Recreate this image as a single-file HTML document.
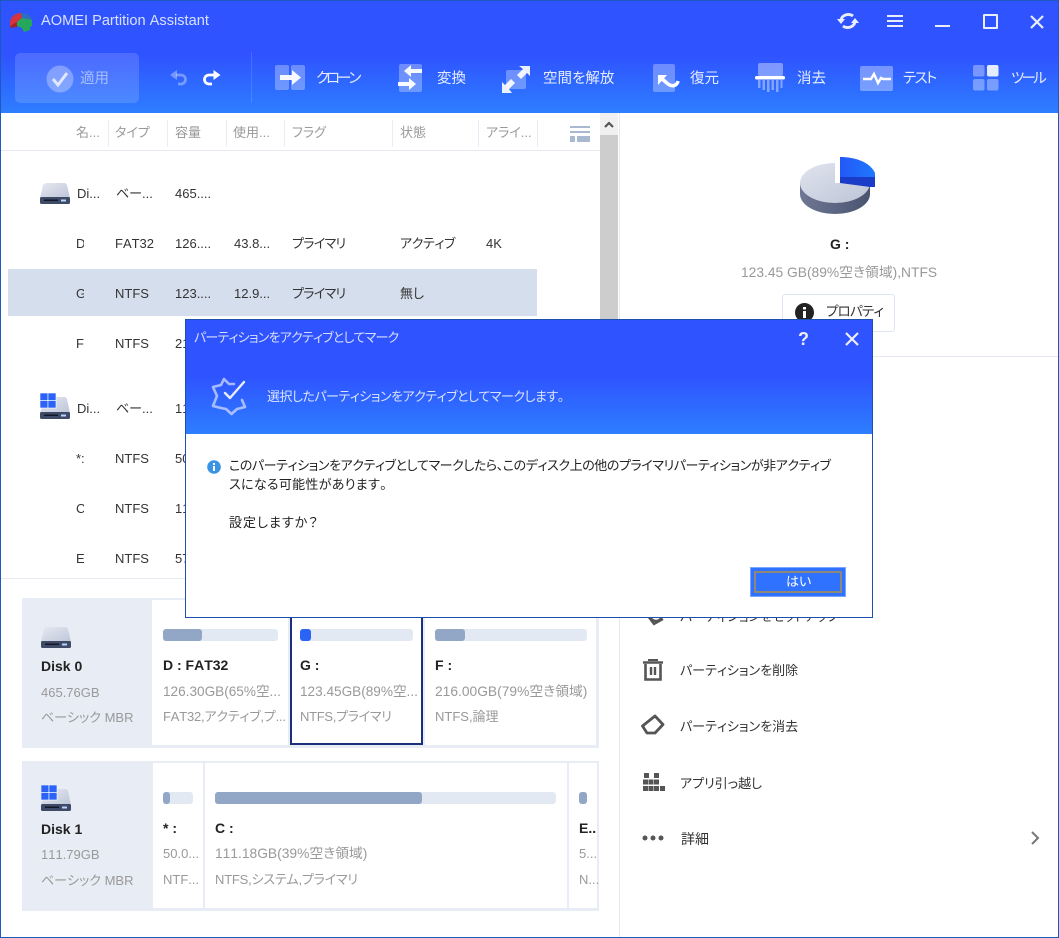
<!DOCTYPE html>
<html lang="ja"><head><meta charset="utf-8"><title>AOMEI Partition Assistant</title>
<style>
html,body{margin:0;padding:0;background:#fff}
#w{position:relative;width:1059px;height:938px;overflow:hidden;background:#fff;font-family:"Liberation Sans","Noto Sans CJK JP",sans-serif;font-feature-settings:"palt";font-kerning:none;color:#333;font-size:13px}
#w div,#w svg{position:absolute}
.t{white-space:nowrap;height:20px;line-height:20px}
.h{font-size:14.500px;color:#fff;opacity:.88}
.c{color:#999;font-size:13px}
.r{color:#333;font-size:13px}
.g{color:#999;font-size:13px}
.g2{color:#999;font-size:13.600px}
.g3{color:#999;font-size:13.800px}
.b{font-weight:bold;color:#222;font-size:13px}
.m{font-size:13px;color:#333}
.sep{width:1px;top:120px;height:27px;background:#e8ecf4}
.bar{height:12px;background:#e3e9f3;border-radius:3px}
.bar div{left:0;top:0;height:12px;background:#92a7c5;border-radius:3px}
.p{background:#fff}
</style></head><body><div id="w">

<div style="left:0;top:0;width:1059px;height:113px;background:linear-gradient(#2f54ff 0,#2f54ff 50%,#2e7eff 100%)"></div>

<svg style="left:9px;top:11px" width="24" height="21" viewBox="0 0 24 21"><path d="M1 11C2 5 7 2 12 2l1 5-5 4-7 4z" fill="#d8333a"/><path d="M12 2c5 0 10 2 11 7l-7-1-3-1z" fill="#2c6fc0"/><path d="M8 11l5-4 10 2v6l-2 1v3l-6 2-2-4-5-2z" fill="#25a85a"/><path d="M1 15l7-4 0 5-6 1z" fill="#a82328"/></svg>
<div class="t" style="left:41px;top:11px;font-size:14.600px;color:#fff;opacity:.82">AOMEI Partition Assistant</div>

<svg style="left:837px;top:11px" width="22" height="20" viewBox="0 0 22 20" fill="none" stroke="#e8eeff" stroke-width="2.800"><path d="M4 9a7.500 7 0 0 1 12-4"/><path d="M18 11a7.500 7 0 0 1-12 4"/><path d="M0 8h8l-4 5z" fill="#e8eeff" stroke="none"/><path d="M14 12h8l-4-5z" fill="#e8eeff" stroke="none"/></svg>
<svg style="left:887px;top:14px" width="16" height="14" fill="#e8eeff"><rect y="1" width="16" height="2"/><rect y="6" width="16" height="2"/><rect y="11" width="16" height="2"/></svg>
<div style="left:935px;top:25px;width:15px;height:2px;background:#e8eeff"></div>
<div style="left:983px;top:14px;width:11px;height:11px;border:2px solid #e8eeff;border-radius:1px"></div>
<svg style="left:1030px;top:15px" width="14" height="14" stroke="#e8eeff" stroke-width="2.200"><path d="M1 1l12 12M13 1L1 13"/></svg>

<div style="left:15px;top:53px;width:124px;height:50px;background:rgba(255,255,255,.14);border-radius:5px"></div>
<svg style="left:46px;top:65px" width="28" height="28"><circle cx="14" cy="14" r="13.500" fill="#fff" opacity=".3"/><path d="M7 14l5 6 9-12" fill="none" stroke="#fff" stroke-opacity=".75" stroke-width="3"/></svg>
<div class="t h" style="left:80px;top:69px;opacity:.5">適用</div>
<svg style="left:168px;top:68px" width="21" height="18" fill="none" stroke="#fff" stroke-opacity=".35" stroke-width="2.800"><path d="M8 7h5a4.500 4.500 0 0 1 0 9h-3"/><path d="M2 7l7-5v10z" fill="#fff" fill-opacity=".35" stroke="none"/></svg>
<svg style="left:201px;top:68px" width="21" height="18" fill="none" stroke="#fff" stroke-width="2.800"><path d="M13 7H8a4.500 4.500 0 0 0 0 9h3"/><path d="M19.500 7l-7-5v10z" fill="#fff" stroke="none"/></svg>
<div style="left:251px;top:52px;width:1px;height:51px;background:rgba(255,255,255,.13)"></div>

<svg style="left:275px;top:65px" width="30" height="26"><rect width="14" height="25" rx="2" fill="#fff" opacity=".3"/><rect x="16" width="14" height="25" rx="2" fill="#fff" opacity=".3"/><path d="M5 10h12V5l9 7.500-9 7.500v-5H5z" fill="#fff" opacity=".95"/></svg>
<div class="t h" style="left:316px;top:69px;letter-spacing:-3px">クローン</div>
<svg style="left:398px;top:64px" width="26" height="29"><rect x="1" width="23" height="28" rx="2" fill="#fff" opacity=".3"/><path d="M24 5H13V1L6 7l7 6V9h11zM0 18h11v-4l7 6-7 6v-4H0z" fill="#fff" opacity=".95"/></svg>
<div class="t h" style="left:437px;top:69px">変換</div>
<svg style="left:502px;top:65px" width="28" height="28"><rect x="4" y="5" width="20" height="19" rx="2" fill="#fff" opacity=".3"/><path d="M17 1h11v10l-3-3-6 6-4-4 6-6zM0 28V17l3 3 6-6 4 4-6 6 3 4z" fill="#fff" opacity=".9"/></svg>
<div class="t h" style="left:543px;top:69px">空間を解放</div>
<svg style="left:653px;top:64px" width="28" height="29"><rect width="22" height="28" rx="2" fill="#fff" opacity=".3"/><path d="M5 11h9l-9 10z" fill="#fff"/><path d="M8 14l7 6c4 3 9 2 10-3" fill="none" stroke="#fff" stroke-width="3.500"/></svg>
<div class="t h" style="left:690px;top:69px">復元</div>
<svg style="left:755px;top:63px" width="31" height="30"><rect x="3" width="25" height="13" rx="2" fill="#fff" opacity=".38"/><rect y="13" width="30" height="3.500" rx="1.500" fill="#fff"/><g fill="#fff" opacity=".4"><rect x="3" y="17" width="2.500" height="8"/><rect x="7.500" y="17" width="2.500" height="10"/><rect x="12" y="17" width="2.500" height="12"/><rect x="16.500" y="17" width="2.500" height="10"/><rect x="21" y="17" width="2.500" height="12"/><rect x="25.500" y="17" width="2" height="8"/></g></svg>
<div class="t h" style="left:797px;top:69px">消去</div>
<svg style="left:860px;top:66px" width="33" height="25"><rect width="33" height="25" rx="2" fill="#fff" opacity=".35"/><path d="M3 13h8l3-5 4 9 3-5 2 1h8" fill="none" stroke="#fff" stroke-width="2.400"/></svg>
<div class="t h" style="left:903px;top:69px;letter-spacing:-1.600px">テスト</div>
<svg style="left:973px;top:65px" width="26" height="26"><g fill="#fff" opacity=".35"><rect width="11.500" height="11.500" rx="2"/><rect y="14" width="11.500" height="11.500" rx="2"/><rect x="14" y="14" width="11.500" height="11.500" rx="2"/></g><rect x="14" width="11.500" height="11.500" rx="2" fill="#e4ecff"/></svg>
<div class="t h" style="left:1011px;top:69px;letter-spacing:-2.700px">ツール</div>

<div style="left:600px;top:113px;width:18px;height:22px;background:#f0f0f0"></div>
<svg style="left:603px;top:120px" width="12" height="9" fill="none" stroke="#555" stroke-width="2.200"><path d="M2 7l4-4 4 4"/></svg>
<div style="left:600px;top:135px;width:18px;height:190px;background:#cdcdcd"></div>
<div style="left:619px;top:113px;width:1px;height:825px;background:#e3e9f3"></div>

<div class="t c" style="left:76px;top:123px">名...</div><div class="sep" style="left:108px"></div>
<div class="t c" style="left:115px;top:123px">タイプ</div><div class="sep" style="left:167px"></div>
<div class="t c" style="left:175px;top:123px">容量</div><div class="sep" style="left:226px"></div>
<div class="t c" style="left:233px;top:123px">使用...</div><div class="sep" style="left:284px"></div>
<div class="t c" style="left:292px;top:123px">フラグ</div><div class="sep" style="left:392px"></div>
<div class="t c" style="left:400px;top:123px">状態</div><div class="sep" style="left:478px"></div>
<div class="t c" style="left:486px;top:123px">アライ...</div><div class="sep" style="left:537px"></div>
<svg style="left:570px;top:126px" width="20" height="17" fill="#a9b9cf"><rect width="20" height="2"/><rect y="5" width="20" height="2"/><rect y="10" width="5" height="6"/><rect x="7" y="10" width="13" height="6"/></svg>
<div style="left:0;top:150px;width:600px;height:1px;background:#e6e9f0"></div>

<div style="left:8px;top:269px;width:529px;height:47px;background:#d5deed"></div>

<svg style="left:40px;top:182px" width="31" height="23"><defs><linearGradient id="dg" x1="0" y1="0" x2="1" y2="1"><stop offset="0" stop-color="#e6e9f1"/><stop offset="1" stop-color="#bdc5d8"/></linearGradient></defs><path d="M7 1h17q2 0 3 2l3 13H0L3 3q1-2 4-2z" fill="url(#dg)"/><rect x="0" y="15" width="30" height="7" rx="1.500" fill="#3e4a66"/><rect x="4" y="17.500" width="14" height="1.500" fill="#12182a"/><rect x="21" y="17.500" width="5" height="2" fill="#b9d4ff"/></svg>
<div class="t r" style="left:77px;top:184px">Di...</div>
<div class="t r" style="left:116px;top:184px">ベー...</div>
<div class="t r" style="left:175px;top:184px">465....</div>

<div class="t r" style="left:76px;top:234px;width:8px;overflow:hidden">D:</div>
<div class="t r" style="left:115px;top:234px">FAT32</div>
<div class="t r" style="left:175px;top:234px">126....</div>
<div class="t r" style="left:234px;top:234px">43.8...</div>
<div class="t r" style="left:292px;top:234px;letter-spacing:-.7px">プライマリ</div>
<div class="t r" style="left:400px;top:234px;letter-spacing:-.4px">アクティブ</div>
<div class="t r" style="left:486px;top:234px">4K</div>

<div class="t r" style="left:76px;top:284px;width:8px;overflow:hidden">G:</div>
<div class="t r" style="left:115px;top:284px">NTFS</div>
<div class="t r" style="left:175px;top:284px">123....</div>
<div class="t r" style="left:234px;top:284px">12.9...</div>
<div class="t r" style="left:292px;top:284px;letter-spacing:-.7px">プライマリ</div>
<div class="t r" style="left:400px;top:284px">無し</div>

<div class="t r" style="left:76px;top:334px;width:8px;overflow:hidden">F:</div>
<div class="t r" style="left:115px;top:334px">NTFS</div>
<div class="t r" style="left:175px;top:334px">216....</div>

<svg style="left:40px;top:393px" width="31" height="27"><path d="M12 4h12q2 0 3 2l3 14H0l3-10z" fill="url(#dg)"/><rect x="0" y="19" width="30" height="7" rx="1.500" fill="#3e4a66"/><rect x="4" y="21.500" width="14" height="1.500" fill="#12182a"/><rect x="21" y="21.500" width="5" height="2" fill="#b9d4ff"/><g fill="#2a63f5" stroke="#fff" stroke-width=".6"><rect x="0" y="0" width="8" height="7.500"/><rect x="8" y="0" width="8" height="7.500"/><rect x="0" y="7.500" width="8" height="7.500"/><rect x="8" y="7.500" width="8" height="7.500"/></g></svg>
<div class="t r" style="left:77px;top:399px">Di...</div>
<div class="t r" style="left:116px;top:399px">ベー...</div>
<div class="t r" style="left:175px;top:399px">111....</div>

<div class="t r" style="left:76px;top:449px;width:8px;overflow:hidden">*:</div>
<div class="t r" style="left:115px;top:449px">NTFS</div>
<div class="t r" style="left:175px;top:449px">50....</div>
<div class="t r" style="left:76px;top:499px;width:8px;overflow:hidden">C:</div>
<div class="t r" style="left:115px;top:499px">NTFS</div>
<div class="t r" style="left:175px;top:499px">111....</div>
<div class="t r" style="left:76px;top:549px;width:8px;overflow:hidden">E:</div>
<div class="t r" style="left:115px;top:549px">NTFS</div>
<div class="t r" style="left:175px;top:549px">57....</div>

<div style="left:0;top:578px;width:619px;height:1px;background:#e6e9f0"></div>

<div style="left:22px;top:598px;width:577px;height:150px;background:#e8ecf4"></div>
<div class="p" style="left:152px;top:600px;width:136px;height:145px"></div>
<div class="p" style="left:290px;top:600px;width:133px;height:145px;box-sizing:border-box;border:2px solid #1c2f7c"></div>
<div class="p" style="left:425px;top:600px;width:171px;height:145px"></div>

<svg style="left:41px;top:626px" width="31" height="23"><path d="M7 1h17q2 0 3 2l3 13H0L3 3q1-2 4-2z" fill="url(#dg)"/><rect x="0" y="15" width="30" height="7" rx="1.500" fill="#3e4a66"/><rect x="4" y="17.500" width="14" height="1.500" fill="#12182a"/><rect x="21" y="17.500" width="5" height="2" fill="#b9d4ff"/></svg>
<div class="t b" style="left:41px;top:656px;font-size:14px">Disk 0</div>
<div class="t g" style="left:41px;top:683px">465.76GB</div>
<div class="t g" style="left:41px;top:708px">ベーシック MBR</div>

<div class="bar" style="left:163px;top:629px;width:115px"><div style="width:39px"></div></div>
<div class="t b" style="left:163px;top:655px;font-size:14px">D : FAT32</div>
<div class="t g2" style="left:163px;top:682px">126.30GB(65%空...</div>
<div class="t g" style="left:163px;top:707px;letter-spacing:-.2px">FAT32,アクティブ,プ...</div>

<div class="bar" style="left:300px;top:629px;width:113px"><div style="width:11px;background:#2a63f5"></div></div>
<div class="t b" style="left:300px;top:655px;font-size:14px">G :</div>
<div class="t g2" style="left:300px;top:682px">123.45GB(89%空...</div>
<div class="t g" style="left:300px;top:707px;letter-spacing:-.3px">NTFS,プライマリ</div>

<div class="bar" style="left:435px;top:629px;width:152px"><div style="width:30px"></div></div>
<div class="t b" style="left:435px;top:655px;font-size:14px">F :</div>
<div class="t g3" style="left:435px;top:682px">216.00GB(79%空き領域)</div>
<div class="t g" style="left:435px;top:707px">NTFS,論理</div>

<div style="left:22px;top:761px;width:577px;height:150px;background:#e8ecf4"></div>
<div class="p" style="left:153px;top:763px;width:50px;height:145px"></div>
<div class="p" style="left:205px;top:763px;width:362px;height:145px"></div>
<div class="p" style="left:569px;top:763px;width:28px;height:145px"></div>

<svg style="left:41px;top:785px" width="31" height="27"><path d="M12 4h12q2 0 3 2l3 14H0l3-10z" fill="url(#dg)"/><rect x="0" y="19" width="30" height="7" rx="1.500" fill="#3e4a66"/><rect x="4" y="21.500" width="14" height="1.500" fill="#12182a"/><rect x="21" y="21.500" width="5" height="2" fill="#b9d4ff"/><g fill="#2a63f5" stroke="#fff" stroke-width=".6"><rect x="0" y="0" width="8" height="7.500"/><rect x="8" y="0" width="8" height="7.500"/><rect x="0" y="7.500" width="8" height="7.500"/><rect x="8" y="7.500" width="8" height="7.500"/></g></svg>
<div class="t b" style="left:41px;top:819px;font-size:14px">Disk 1</div>
<div class="t g" style="left:41px;top:845px">111.79GB</div>
<div class="t g" style="left:41px;top:871px">ベーシック MBR</div>

<div class="bar" style="left:163px;top:792px;width:30px"><div style="width:7px"></div></div>
<div class="t b" style="left:163px;top:818px;font-size:14px">* :</div>
<div class="t g" style="left:163px;top:844px">50.0...</div>
<div class="t g" style="left:163px;top:870px">NTF...</div>

<div class="bar" style="left:215px;top:792px;width:341px"><div style="width:207px"></div></div>
<div class="t b" style="left:215px;top:818px;font-size:14px">C :</div>
<div class="t g3" style="left:215px;top:844px">111.18GB(39%空き領域)</div>
<div class="t g" style="left:215px;top:870px;letter-spacing:-.2px">NTFS,システム,プライマリ</div>

<div class="bar" style="left:579px;top:792px;width:8px"><div style="width:8px"></div></div>
<div class="t b" style="left:579px;top:818px;font-size:14px;width:18px;overflow:hidden">E...</div>
<div class="t g" style="left:579px;top:844px">5...</div>
<div class="t g" style="left:579px;top:870px">N...</div>

<svg style="left:798px;top:155px" width="80" height="62"><defs><linearGradient id="pg" x1="0" y1="0" x2="1" y2="1"><stop offset="0" stop-color="#e0e4ee"/><stop offset="1" stop-color="#bcc4d6"/></linearGradient><linearGradient id="ps" x1="0" y1="0" x2="1" y2="0"><stop offset="0" stop-color="#6e7793"/><stop offset="1" stop-color="#4a5470"/></linearGradient><linearGradient id="pb" x1="0" y1="0" x2="1" y2="0"><stop offset="0" stop-color="#2358f5"/><stop offset="1" stop-color="#1e78ff"/></linearGradient></defs>
<path d="M2 28v11a35 20 0 0 0 70 0V28z" fill="url(#ps)"/><path d="M37 8A35 20 0 1 0 72 28H37z" fill="url(#pg)"/><path d="M42 22h35v10h-5l-30-4z" fill="#1b3cc8"/><path d="M42 2c15 0 30 5 35 16v4H42z" fill="url(#pb)"/></svg>
<div class="t b" style="left:830px;top:234px;font-size:14px">G :</div>
<div class="t g3" style="left:741px;top:263px">123.45 GB(89%空き領域),NTFS</div>
<div style="left:782px;top:294px;width:113px;height:38px;box-sizing:border-box;border:1px solid #dfe5f0;border-radius:3px;background:#fff"></div>
<svg style="left:795px;top:303px" width="19" height="19"><circle cx="9.500" cy="9.500" r="9.500" fill="#222"/><rect x="8" y="8" width="3" height="7" fill="#fff"/><rect x="8" y="4" width="3" height="2.500" fill="#fff"/></svg>
<div class="t m" style="left:826px;top:302px;font-size:13.500px;letter-spacing:-.8px">プロパティ</div>
<div style="left:620px;top:356px;width:438px;height:1px;background:#e6e9f0"></div>

<svg style="left:642px;top:604px" width="24" height="24" fill="none" stroke="#555" stroke-width="2.400"><path d="M3 8l9 12 9-5"/><circle cx="14" cy="11" r="6"/></svg>
<div class="t m" style="left:680px;top:607px">パーティションをセットアップ</div>
<svg style="left:642px;top:658px" width="22" height="24" fill="none" stroke="#555"><path d="M1 4.500h20" stroke-width="2.600"/><path d="M6 2h10" stroke-width="2"/><path d="M3.500 6v15.500h15V6" stroke-width="2.600"/><path d="M9 9v8M13 9v8" stroke-width="2.400"/></svg>
<div class="t m" style="left:680px;top:661px">パーティションを削除</div>
<svg style="left:641px;top:714px" width="24" height="22" fill="none" stroke="#555" stroke-width="2.800" stroke-linejoin="round"><path d="M1.500 12L14 2l8 8.500-8 8.500H6z"/></svg>
<div class="t m" style="left:680px;top:717px">パーティションを消去</div>
<svg style="left:642px;top:772px" width="24" height="22" fill="#555"><rect x="2" y="1" width="5" height="5"/><rect x="12" y="1" width="5" height="5"/><rect x="1" y="7.500" width="5" height="5"/><rect x="6.500" y="7.500" width="5" height="5"/><rect x="12" y="7.500" width="5" height="5"/><rect x="1" y="14" width="5" height="5"/><rect x="6.500" y="14" width="5" height="5"/><rect x="12" y="14" width="5" height="5"/><rect x="18" y="14" width="5" height="5"/></svg>
<div class="t m" style="left:680px;top:774px">アプリ引っ越し</div>
<svg style="left:642px;top:835px" width="22" height="6" fill="#555"><circle cx="3" cy="3" r="2.500"/><circle cx="11" cy="3" r="2.500"/><circle cx="19" cy="3" r="2.500"/></svg>
<div class="t m" style="left:681px;top:829px;font-size:14px">詳細</div>
<svg style="left:1030px;top:830px" width="12" height="16" fill="none" stroke="#777" stroke-width="2"><path d="M2 2l6 6-6 6"/></svg>

<div style="left:0;top:0;width:1057px;height:936px;border:1px solid #1c5ac0"></div>

<div style="left:185px;top:319px;width:688px;height:299px;box-sizing:border-box;border:1px solid #1c4fae;background:#fff;overflow:hidden">
  <div style="left:0;top:0;width:686px;height:114px;background:linear-gradient(#2f54ff 0,#2f54ff 50%,#2e7eff 100%)"></div>
</div>
<div class="t" style="left:194px;top:328px;color:#fff;opacity:.8;font-size:13px;letter-spacing:-.8px">パーティションをアクティブとしてマーク</div>
<div class="t" style="left:798px;top:329px;color:#eef;font-size:18px;font-weight:bold">?</div>
<svg style="left:845px;top:332px" width="14" height="14" stroke="#eef" stroke-width="2.200"><path d="M1 1l12 12M13 1L1 13"/></svg>
<svg style="left:210px;top:376px" width="38" height="40" fill="none" stroke-linejoin="round" stroke-linecap="round"><path d="M24 8L19 8 14 3 11 9 3 11 7 20 3 30 11 32 16 33 21.500 38 27 33 35 31 32 24" stroke="#c5d2ff" stroke-opacity=".8" stroke-width="2.600"/><path d="M15 17l5 5 14-16" stroke="#e8eeff" stroke-width="2.400"/></svg>
<div class="t" style="left:267px;top:387px;color:#fff;opacity:.82;font-size:13px;letter-spacing:-.5px">選択したパーティションをアクティブとしてマークします。</div>

<svg style="left:207px;top:460px" width="14" height="14"><circle cx="7" cy="7" r="6.800" fill="#3a94e3"/><rect x="6" y="6" width="2" height="5" fill="#fff"/><rect x="6" y="3" width="2" height="2" fill="#fff"/></svg>
<div class="t" style="left:229px;top:456px;font-size:13px;color:#222;letter-spacing:-.43px">このパーティションをアクティブとしてマークしたら、このディスク上の他のプライマリパーティションが非アクティブ</div>
<div class="t" style="left:229px;top:475px;font-size:13px;color:#222;letter-spacing:.3px">スになる可能性があります。</div>
<div class="t" style="left:229px;top:513px;font-size:13px;color:#222;letter-spacing:1px">設定しますか？</div>
<div style="left:750px;top:567px;width:96px;height:30px;box-sizing:border-box;background:#2e72ff;border:1px solid #7aa5ff"></div>
<div style="left:754px;top:571px;width:88px;height:22px;box-sizing:border-box;border:2px solid #8f8778"></div>
<div class="t" style="left:786px;top:572px;color:#fff;font-size:13px">はい</div>

</div></body></html>
